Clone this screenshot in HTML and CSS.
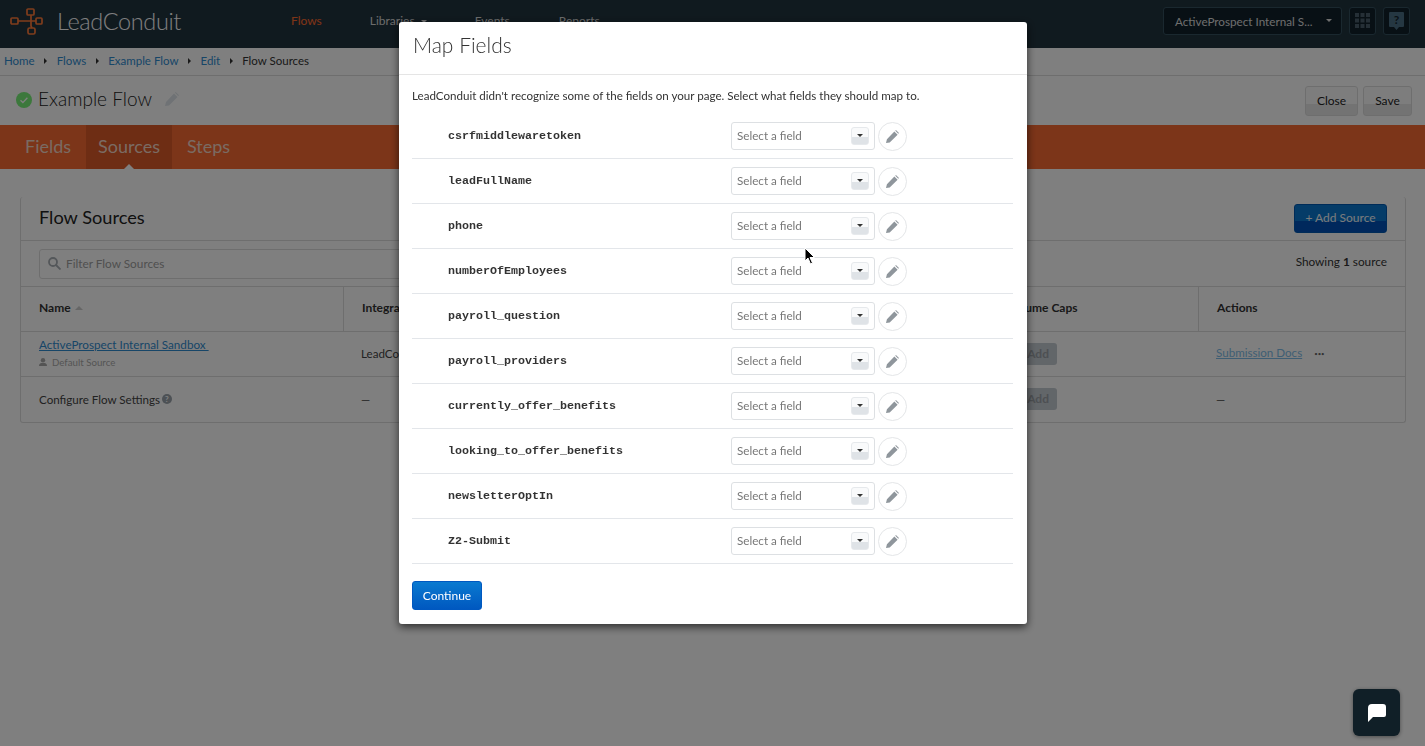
FILE: index.html
```html
<!DOCTYPE html>
<html lang="en">
<head>
<meta charset="utf-8">
<title>LeadConduit</title>
<link rel="stylesheet" href="styles.css">
</head>
<body>
<div class="page">
  <header class="topbar">
    <div class="brand">
      <svg class="logo" width="34" height="30" viewBox="0 0 34 30" fill="none" stroke="#ff7a38" stroke-width="1.7"><rect x="1" y="10" width="7" height="6" rx="1"/><rect x="17" y="1" width="7" height="6" rx="1"/><rect x="26" y="10" width="6" height="6" rx="1"/><rect x="18" y="20" width="7" height="6" rx="1.5"/><path d="M8 13h18M21 7v6M21 13v5l1 2"/></svg>
      <span class="brand-name">LeadConduit</span>
    </div>
    <nav class="mainnav">
      <a class="nav-active">Flows</a>
      <a class="nav-libs">Libraries <i class="caret"></i></a>
      <a class="nav-events">Events</a>
      <a>Reports</a>
    </nav>
    <div class="top-right">
      <div class="account"><span>ActiveProspect Internal S...</span><i class="caret"></i></div>
      <div class="square-btn">
        <svg width="15" height="15" viewBox="0 0 15 15" fill="#4a5f6c"><rect width="4" height="4"/><rect x="5.5" width="4" height="4"/><rect x="11" width="4" height="4"/><rect y="5.5" width="4" height="4"/><rect x="5.5" y="5.5" width="4" height="4"/><rect x="11" y="5.5" width="4" height="4"/><rect y="11" width="4" height="4"/><rect x="5.5" y="11" width="4" height="4"/><rect x="11" y="11" width="4" height="4"/></svg>
      </div>
      <div class="square-btn">
        <svg width="15" height="18" viewBox="0 0 15 18"><path d="M1 0h13a1 1 0 0 1 1 1v13a1 1 0 0 1-1 1H10l-2.500 3L5 15H1a1 1 0 0 1-1-1V1a1 1 0 0 1 1-1z" fill="#4a6f85"/><text x="7.500" y="12" text-anchor="middle" class="help-q">?</text></svg>
      </div>
    </div>
  </header>

  <div class="crumbs">
    <a>Home</a><i class="sep"></i><a>Flows</a><i class="sep"></i><a>Example Flow</a><i class="sep"></i><a>Edit</a><i class="sep"></i><span>Flow Sources</span>
  </div>

  <div class="titlebar">
    <svg class="ok" width="16" height="16" viewBox="0 0 16 16"><circle cx="8" cy="8" r="8" fill="#78f078"/><path d="M4.500 8.200l2.400 2.300 4.500-4.700" fill="none" stroke="#fff" stroke-width="1.300"/></svg>
    <h1>Example Flow</h1>
    <svg class="title-pencil" width="14" height="14" viewBox="0 0 14 14"><path d="M0 14l1-4 8-8.500 3.500 3.500L4 13.500z M10 .7l.7-.7 3.300 3.300-.8.800z" fill="#dfe5ea"/></svg>
    <div class="title-actions"><button class="btn-light">Close</button><button class="btn-light">Save</button></div>
  </div>

  <div class="tabs">
    <a>Fields</a><a class="tab-active">Sources</a><a>Steps</a>
  </div>

  <section class="panel">
    <div class="panel-head">
      <h2>Flow Sources</h2>
      <button class="btn-add">+ Add Source</button>
    </div>
    <div class="filter-row">
      <div class="filter">
        <svg width="13" height="13" viewBox="0 0 13 13" fill="none" stroke="#a8aeb4" stroke-width="1.800"><circle cx="5" cy="5" r="4"/><path d="M8 8l4.500 4.500"/></svg>
        <span>Filter Flow Sources</span>
      </div>
      <div class="count">Showing <b>1</b> source</div>
    </div>
    <div class="table">
      <div class="th">Name <i class="sort"></i></div>
      <div class="th">Integration</div>
      <div class="th">Volume Caps</div>
      <div class="th">Actions</div>

      <div class="td td-name"><a class="source-link">ActiveProspect Internal Sandbox&nbsp;</a>
        <div class="default-src"><svg width="8" height="8" viewBox="0 0 8 8" fill="#a8a8a8"><circle cx="4" cy="2.200" r="2.200"/><path d="M0 8c0-2.500 1.500-3 4-3s4 .5 4 3z"/></svg>Default Source</div></div>
      <div class="td">LeadConduit</div>
      <div class="td"><span class="add">Add</span></div>
      <div class="td"><a class="docs">Submission Docs</a><span class="dots">•••</span></div>

      <div class="td">Configure Flow Settings <i class="qmark">?</i></div>
      <div class="td">—</div>
      <div class="td"><span class="add">Add</span></div>
      <div class="td">—</div>
    </div>
  </section>
</div>

<div class="overlay">
  <div class="modal">
    <h3 class="modal-title">Map Fields</h3>
    <div class="modal-body">
      <p class="intro">LeadConduit didn't recognize some of the fields on your page. Select what fields they should map to.</p>
      <div class="map-row"><code>csrfmiddlewaretoken</code><div class="select"><span>Select a field</span><i class="sel-btn"></i></div><div class="edit"><svg width="13" height="13" viewBox="0 0 14 14"><path d="M0 14l1-4 8-8.500 3.500 3.500L4 13.500z M10 .7l.7-.7 3.300 3.300-.8.800z" fill="#8f969c"/></svg></div></div>
      <div class="map-row"><code>leadFullName</code><div class="select"><span>Select a field</span><i class="sel-btn"></i></div><div class="edit"><svg width="13" height="13" viewBox="0 0 14 14"><path d="M0 14l1-4 8-8.500 3.500 3.500L4 13.500z M10 .7l.7-.7 3.300 3.300-.8.800z" fill="#8f969c"/></svg></div></div>
      <div class="map-row"><code>phone</code><div class="select"><span>Select a field</span><i class="sel-btn"></i></div><div class="edit"><svg width="13" height="13" viewBox="0 0 14 14"><path d="M0 14l1-4 8-8.500 3.500 3.500L4 13.500z M10 .7l.7-.7 3.300 3.300-.8.800z" fill="#8f969c"/></svg></div></div>
      <div class="map-row"><code>numberOfEmployees</code><div class="select"><span>Select a field</span><i class="sel-btn"></i></div><div class="edit"><svg width="13" height="13" viewBox="0 0 14 14"><path d="M0 14l1-4 8-8.500 3.500 3.500L4 13.500z M10 .7l.7-.7 3.300 3.300-.8.800z" fill="#8f969c"/></svg></div></div>
      <div class="map-row"><code>payroll_question</code><div class="select"><span>Select a field</span><i class="sel-btn"></i></div><div class="edit"><svg width="13" height="13" viewBox="0 0 14 14"><path d="M0 14l1-4 8-8.500 3.500 3.500L4 13.500z M10 .7l.7-.7 3.300 3.300-.8.800z" fill="#8f969c"/></svg></div></div>
      <div class="map-row"><code>payroll_providers</code><div class="select"><span>Select a field</span><i class="sel-btn"></i></div><div class="edit"><svg width="13" height="13" viewBox="0 0 14 14"><path d="M0 14l1-4 8-8.500 3.500 3.500L4 13.500z M10 .7l.7-.7 3.300 3.300-.8.800z" fill="#8f969c"/></svg></div></div>
      <div class="map-row"><code>currently_offer_benefits</code><div class="select"><span>Select a field</span><i class="sel-btn"></i></div><div class="edit"><svg width="13" height="13" viewBox="0 0 14 14"><path d="M0 14l1-4 8-8.500 3.500 3.500L4 13.500z M10 .7l.7-.7 3.300 3.300-.8.800z" fill="#8f969c"/></svg></div></div>
      <div class="map-row"><code>looking_to_offer_benefits</code><div class="select"><span>Select a field</span><i class="sel-btn"></i></div><div class="edit"><svg width="13" height="13" viewBox="0 0 14 14"><path d="M0 14l1-4 8-8.500 3.500 3.500L4 13.500z M10 .7l.7-.7 3.300 3.300-.8.800z" fill="#8f969c"/></svg></div></div>
      <div class="map-row"><code>newsletterOptIn</code><div class="select"><span>Select a field</span><i class="sel-btn"></i></div><div class="edit"><svg width="13" height="13" viewBox="0 0 14 14"><path d="M0 14l1-4 8-8.500 3.500 3.500L4 13.500z M10 .7l.7-.7 3.300 3.300-.8.800z" fill="#8f969c"/></svg></div></div>
      <div class="map-row"><code>Z2-Submit</code><div class="select"><span>Select a field</span><i class="sel-btn"></i></div><div class="edit"><svg width="13" height="13" viewBox="0 0 14 14"><path d="M0 14l1-4 8-8.500 3.500 3.500L4 13.500z M10 .7l.7-.7 3.300 3.300-.8.800z" fill="#8f969c"/></svg></div></div>
      <button class="btn-continue">Continue</button>
    </div>
  </div>
</div>

<svg class="cursor" width="12" height="18" viewBox="0 0 12 18"><path d="M1 1v13l3-3 2.500 6 2-1-2.500-5.500H10.500z" fill="#000" stroke="#fff" stroke-width="1"/></svg>

<div class="chat">
  <svg width="18" height="18" viewBox="0 0 18 18"><path d="M4 0h11a3 3 0 0 1 3 3v8a2 2 0 0 1-2 2H5l-5 5V4a4 4 0 0 1 4-4z" fill="#fff"/></svg>
</div>
</body>
</html>
```

FILE: styles.css
```css
* { box-sizing: border-box; }
html, body { margin: 0; padding: 0; height: 100%; overflow: hidden; }
body { font-family: Lato, "Liberation Sans", sans-serif; font-size: 13px; color: #333; background: #fff; }
.page { height: 746px; display: flex; flex-direction: column; }
a { color: #2f8cd0; }

.topbar { height: 48px; flex: none; background: #21343e; display: flex; align-items: center; padding: 0 15px 7px 10px; color: #ddd; }
.brand { display: flex; align-items: center; width: 281px; }
.logo { margin: 5px 13px 0 0; }
.brand-name { font-size: 23.500px; font-weight: 300; color: #fff; letter-spacing: -.35px; }
.mainnav { display: flex; font-size: 12px; color: #d0d0d0; }
.mainnav a { color: #d8d8d8; }
.mainnav .nav-active { color: #ff6a2e; margin-right: 48px; }
.mainnav .nav-libs { margin-right: 48px; }
.mainnav .nav-events { margin-right: 49px; }
.caret { display: inline-block; width: 0; height: 0; border: 3.500px solid transparent; border-top-color: currentColor; border-bottom: 0; vertical-align: middle; margin-left: 3px; }
.top-right { margin-left: auto; display: flex; gap: 7px; }
.account { width: 179px; height: 28px; background: #11212b; border: 1px solid #34505f; border-radius: 3px; display: flex; align-items: center; justify-content: space-between; padding: 0 9px 0 11px; color: #dcdcdc; font-size: 11.700px; white-space: nowrap; }
.square-btn { width: 27px; height: 28px; background: #11212b; border: 1px solid #34505f; border-radius: 3px; display: flex; align-items: center; justify-content: center; }
.help-q { font: 700 12px Lato, sans-serif; fill: #11212b; }

.crumbs { height: 28px; flex: none; padding: 0 4px 2px; background: #fff; border-bottom: 1px solid #ddd; display: flex; align-items: center; font-size: 11.500px; color: #333; }
.sep { width: 0; height: 0; border: 3px solid transparent; border-left-color: #333; border-right: 0; margin: 0 9.500px; }

.titlebar { height: 49px; flex: none; background: #fff; display: flex; align-items: center; padding: 0 13px 0 16px; }
.ok { margin: 0 6px 2px 0; }
.titlebar h1 { font-size: 19px; font-weight: 300; margin: 0 13px 5px 0; color: #222; }
.title-pencil { margin-bottom: 4px; }
.title-actions { margin-left: auto; display: flex; gap: 5px; }
.btn-light { width: 53px; height: 30px; padding: 0; font: 12px Lato, sans-serif; color: #222; border: 1px solid #ddd; border-radius: 3px; background: linear-gradient(#fafafa 60%, #e6e6e6 60%); }
.btn-light + .btn-light { width: 49px; }

.tabs { height: 44px; flex: none; background: #f86a32; display: flex; padding-left: 11px; font-size: 18px; }
.tabs a { color: #f5d6c6; padding: 0 14px; line-height: 42px; position: relative; }
.tabs .tab-active { background: #dd5a28; padding: 0 12px; margin: 0 1px; }
.tab-active::after { content: ""; position: absolute; left: 50%; bottom: 0; margin-left: -5px; border: 5px solid transparent; border-bottom-color: #fff; border-top: 0; }

.panel { margin: 28px 19px 0 20px; border: 1px solid #ddd; border-top: 0; border-radius: 3px; }
.panel-head { height: 44px; display: flex; align-items: center; justify-content: space-between; padding: 0 18px; border-bottom: 1px solid #ddd; }
.panel-head h2 { font-size: 18.200px; font-weight: 400; margin: 0 0 4px; color: #222; }
.btn-add { width: 93px; height: 29px; padding: 0 0 2px; border: 1px solid #0058b0; border-radius: 3px; font: 12px Lato, sans-serif; color: #f4f7fa; background: linear-gradient(#0a78d0 60%, #0050b8 60%); }
.filter-row { height: 46px; display: flex; align-items: center; justify-content: space-between; padding: 0 18px; border-bottom: 1px solid #ddd; }
.filter { width: 720px; height: 30px; border: 1px solid #ddd; border-radius: 3px; display: flex; align-items: center; gap: 5px; padding-left: 8px; color: #a0a0a0; font-size: 11.800px; }
.count { font-size: 11.800px; color: #333; margin-top: -5px; }

.table { display: grid; grid-template-columns: 322px 646px 209px 208px; grid-template-rows: 45px 45px 45px; }
.th { font-size: 12px; font-weight: 700; color: #333; display: flex; align-items: center; padding: 0 0 3px 18px; gap: 4px; border-bottom: 1px solid #ddd; border-left: 1px solid #ddd; }
.th:first-child { border-left: 0; }
.td { padding: 0 0 1px 18px; display: flex; align-items: center; flex-wrap: wrap; border-bottom: 1px solid #ddd; font-size: 11.600px; color: #444; }
.table > :nth-last-child(-n+4) { border-bottom: 0; }
.td-name { align-content: center; gap: 5px; padding-bottom: 4px; }
.source-link { color: #2f8cd0; text-decoration: underline; width: 100%; font-size: 11.700px; }
.default-src { font-size: 9.700px; color: #aaa; display: flex; align-items: center; gap: 5px; }
.sort { width: 0; height: 0; border: 4px solid transparent; border-bottom-color: #ccc; border-top: 0; }
.qmark { display: inline-flex; width: 10px; height: 10px; margin-left: 2px; border-radius: 50%; background: #9aa3ab; color: #fff; font: 700 8px/10px Lato, sans-serif; justify-content: center; }
.add { width: 50px; text-align: right; padding-right: 8px; height: 22px; line-height: 22px; border-radius: 3px; background: #c5ccd2; color: #9aa0a6; font-weight: 700; font-size: 12px; }
.docs { color: #7ebde8; text-decoration: underline; margin-bottom: 2px; }
.dots { font-size: 6px; color: #666; margin-left: 12px; }

.overlay { position: fixed; inset: 0; background: rgba(0,0,0,.5); }
.modal { position: absolute; left: 399px; top: 22px; width: 628px; height: 602px; background: #fff; border-radius: 3px; box-shadow: 0 3px 9px rgba(0,0,0,.65); display: flex; flex-direction: column; }
.modal-title { height: 53px; flex: none; margin: 0; padding: 0 14px 7px; display: flex; align-items: center; font-size: 21px; font-weight: 300; color: #333; border-bottom: 1px solid #e5e5e5; }
.modal-body { padding: 0 14px 0 13px; }
.intro { margin: 14px 0 0; height: 25px; font-size: 11.600px; color: #333; line-height: 13px; }
.map-row { height: 45px; display: flex; align-items: center; border-bottom: 1px solid #e3e6ea; }
.map-row code { width: 319px; padding-left: 36px; font: 700 11.670px "Liberation Mono", monospace; color: #333; }
.select { width: 144px; height: 28px; border: 1px solid #dde0e3; border-radius: 3px; display: flex; align-items: center; justify-content: space-between; padding: 0 5px; font-size: 11.650px; color: #777; }
.select span { margin-bottom: 2px; }
.sel-btn { width: 18px; height: 18px; border: 1px solid #e6e9ec; border-radius: 3px; background: linear-gradient(#f9fafb 55%, #dfe3e7 55%); position: relative; }
.sel-btn::after { content: ""; position: absolute; left: 4.500px; top: 6px; border: 3.500px solid transparent; border-top-color: #333; border-bottom: 0; }
.edit { width: 29px; height: 29px; margin-left: 3px; border: 1.500px solid #e4e6e8; border-radius: 50%; display: flex; align-items: center; justify-content: center; }
.btn-continue { display: block; margin-top: 17px; width: 70px; height: 29px; padding: 0; border: 1px solid #0058c0; border-radius: 3px; font: 12px Lato, sans-serif; color: #fff; background: linear-gradient(#0a7ad0, #0058c0); }

.cursor { position: fixed; left: 804px; top: 247px; }
.chat { position: fixed; left: 1353px; top: 689px; width: 47px; height: 47px; border-radius: 6px; background: #101f27; box-shadow: 0 1px 4px rgba(0,0,0,.4); display: flex; align-items: center; justify-content: center; }
```
